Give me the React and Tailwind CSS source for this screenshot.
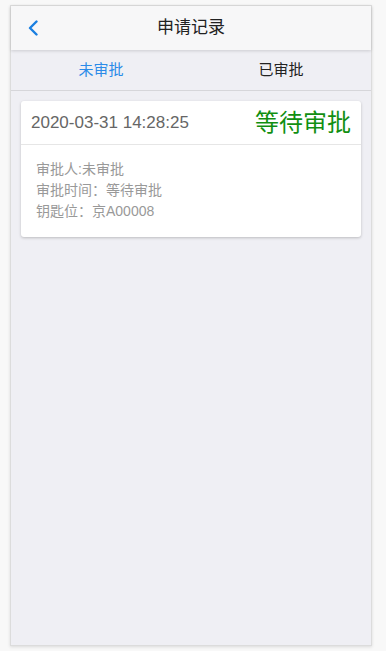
const record = {
  time: '2020-03-31 14:28:25',
  status: '等待审批',
  approver: '未审批',
  approveTime: '等待审批',
  keySlot: '京A00008',
}

function BackIcon() {
  return (
    <svg width="12" height="16" viewBox="0 0 12 16" fill="none">
      <polyline
        points="9.5,1.5 3,8 9.5,14.5"
        stroke="currentColor"
        strokeWidth="2.4"
        strokeLinecap="round"
        strokeLinejoin="round"
      />
    </svg>
  )
}

function RecordCard({ item }) {
  return (
    <div className="mx-[10px] mt-[10px] bg-white rounded-[3px] shadow-[0_1px_3px_rgba(0,0,0,0.22)]">
      {/* card head */}
      <div className="h-[44px] flex items-center justify-between pl-[10px] pr-[10px] border-b border-[#e6e6e6]">
        <span className="text-[17px] text-[#666]">{item.time}</span>
        <span className="text-[24px] text-[#118f11]">{item.status}</span>
      </div>
      {/* card body */}
      <div className="pl-[15px] pt-[14px] pb-[15px] text-[14px] leading-[21px] text-[#999]">
        <p>审批人:{item.approver}</p>
        <p>审批时间：{item.approveTime}</p>
        <p>钥匙位：{item.keySlot}</p>
      </div>
    </div>
  )
}

export default function App() {
  return (
    <div
      className="w-[386px] h-[651px] bg-[#f8f8f8] pt-[5px] pl-[10px]"
      style={{ fontFamily: '"Liberation Sans", "Noto Sans CJK SC", sans-serif' }}
    >
      <div className="w-[362px] h-[641px] flex flex-col bg-[#efeff4] border border-[#dcdcdc] shadow-[0_1px_3px_rgba(0,0,0,0.12)]">
        {/* Header */}
        <div className="relative h-[44px] flex-shrink-0 flex items-center justify-center bg-[#f7f7f8] shadow-[0_1px_3px_rgba(0,0,0,0.15)] z-10">
          <button className="absolute left-[16px] top-1/2 -translate-y-1/2 flex text-[#1a7fe0]">
            <BackIcon />
          </button>
          <h1 className="text-[17px] text-[#222]">申请记录</h1>
        </div>

        {/* Tabs */}
        <div className="h-[41px] flex-shrink-0 flex border-b border-[#d6d6da]">
          <div className="flex-1 flex items-center justify-center text-[15px] text-[#2b8be8]">未审批</div>
          <div className="flex-1 flex items-center justify-center text-[15px] text-[#222]">已审批</div>
        </div>

        <RecordCard item={record} />
      </div>
    </div>
  )
}
